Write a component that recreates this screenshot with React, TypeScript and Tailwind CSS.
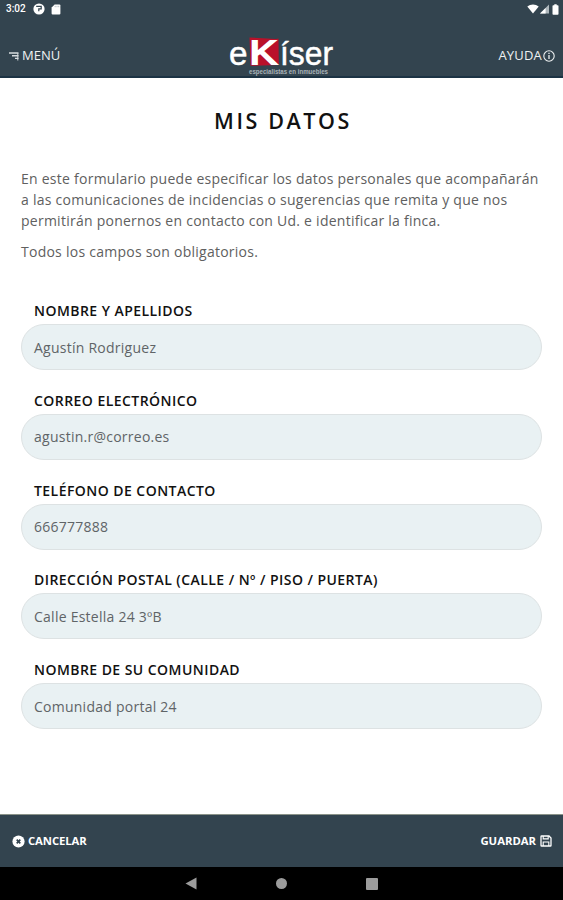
import React from "react";

interface Field {
  id: string;
  label: string;
  value: string;
}

const fields: Field[] = [
  { id: "nombre", label: "NOMBRE Y APELLIDOS", value: "Agustín Rodriguez" },
  { id: "correo", label: "CORREO ELECTRÓNICO", value: "agustin.r@correo.es" },
  { id: "telefono", label: "TELÉFONO DE CONTACTO", value: "666777888" },
  { id: "direccion", label: "DIRECCIÓN POSTAL (CALLE / Nº / PISO / PUERTA)", value: "Calle Estella 24 3ºB" },
  { id: "comunidad", label: "NOMBRE DE SU COMUNIDAD", value: "Comunidad portal 24" },
];

function StatusBar() {
  return (
    <div className="flex h-[18px] items-center justify-between pl-[6px] pr-[4px] font-['Roboto',sans-serif] text-white">
      <div className="flex items-center">
        <span className="w-[27px] text-[10px] font-medium leading-none">3:02</span>
        <svg className="h-[12px] w-[12px]" viewBox="0 0 12 12">
          <circle cx="6" cy="6" r="5.6" fill="#fff" />
          <path d="M3.2 3.4h5v2.400h-2.400v2.400" fill="none" stroke="#33444f" strokeWidth="1.200" />
        </svg>
        <svg className="ml-[6px] h-[11px] w-[10px]" viewBox="0 0 10 11">
          <path d="M3.600.6H8.400a1 1 0 011 1v7.800a1 1 0 01-1 1H1.600a1 1 0 01-1-1V3.600z" fill="#fff" />
          <path d="M4.200 1.800v1.400M6 1.800v1.400M7.700 1.800v1.400" stroke="#8b979e" strokeWidth=".6" />
        </svg>
      </div>
      <div className="flex items-center">
        <svg className="h-[10px] w-[12px]" viewBox="0 0 12 10">
          <path d="M.3 2.600C3.600-.3 8.400-.3 11.700 2.600L6 9.600z" fill="#fff" />
        </svg>
        <svg className="ml-px h-[10px] w-[9px]" viewBox="0 0 9 10">
          <path d="M9 .4V9.400H0z" fill="#aeb7bc" />
          <path d="M5.600 3.900V9.400H0z" fill="#fff" />
        </svg>
        <svg className="ml-[3px] h-[11px] w-[7px]" viewBox="0 0 7 11">
          <path d="M2.300.3h2.400v1h1a.8.8 0 01.8.8v7.800a.8.8 0 01-.8.8H1.300a.8.8 0 01-.8-.8V2.100a.8.8 0 01.8-.8h1z" fill="#fff" />
        </svg>
      </div>
    </div>
  );
}

function Logo() {
  return (
    <svg
      className="h-[41px] w-[110px] overflow-visible"
      viewBox="0 0 110 41"
      fontFamily="'Liberation Sans', Arial, sans-serif"
    >
      <path d="M22.500 2.500L49 4l2.500-.6.3 26.600-28.300.800z" fill="#b9112a" />
      <g fill="#fff" stroke="#fff" strokeWidth=".5">
        <text x="2" y="29.500" fontSize="33" textLength="18.500" lengthAdjust="spacingAndGlyphs">e</text>
        <text x="22.500" y="29" fontSize="33" strokeWidth="1.800" textLength="27.500" lengthAdjust="spacingAndGlyphs">K</text>
        <text x="53" y="29.500" fontSize="33" textLength="53" lengthAdjust="spacingAndGlyphs">íser</text>
      </g>
      <text x="22" y="38.500" fontSize="7" fontWeight="700" fill="#a9b3b9" textLength="79" lengthAdjust="spacingAndGlyphs">
        especialistas en inmuebles
      </text>
    </svg>
  );
}

function Header() {
  return (
    <header className="h-[78px] border-b-2 border-[#1c3344] bg-[#33444f]">
      <StatusBar />
      <div className="grid grid-cols-[1fr_110px_1fr] pt-[17px] text-[13px] text-[#eef1f2]">
        <button className="flex h-[42px] items-center pl-[9px]">
          <svg className="h-[9px] w-[10px]" viewBox="0 0 10 9">
            <path d="M0 1h9.500M3 3.700h6.500M6 6.400h3.500" stroke="#d5dadd" strokeWidth="1.400" />
            <path d="M8.800 1v7.500" stroke="#d5dadd" strokeWidth="1" />
          </svg>
          <span className="ml-[3px]">MENÚ</span>
        </button>
        <Logo />
        <button className="flex h-[42px] items-center justify-end pr-[8px]">
          <span className="tracking-[0.2px]">AYUDA</span>
          <svg className="ml-px h-[12px] w-[12px]" viewBox="0 0 12 12" fill="none" stroke="#eef1f2">
            <circle cx="6" cy="6" r="5.200" strokeWidth="1.100" />
            <path d="M6 2.800v1.300M6 5.100v4" strokeWidth="1.300" />
          </svg>
        </button>
      </div>
    </header>
  );
}

function FormField({ field }: { field: Field }) {
  return (
    <div>
      <div id={field.id} className="pl-[13px] text-[14px] font-semibold leading-[20px] tracking-[0.45px] text-[#111]">
        {field.label}
      </div>
      <div
        aria-labelledby={field.id}
        className="mt-[3px] flex h-[46px] items-center rounded-full border border-[#dde2e3] bg-[#e9f1f3] pl-[12px] text-[14px] tracking-[0.25px] text-[#5f6467]"
      >
        {field.value}
      </div>
    </div>
  );
}

export default function App() {
  return (
    <div className="flex h-[900px] w-[563px] flex-col overflow-hidden bg-white font-['Open_Sans',sans-serif]">
      <Header />

      <main className="flex-1 px-[21px]">
        <h1 className="mt-[28px] pl-[3px] text-center text-[21.5px] font-semibold leading-[30px] tracking-[2.6px] text-[#111]">
          MIS DATOS
        </h1>
        <div className="mt-[32px] whitespace-nowrap text-[14px] leading-[21px] tracking-[0.25px] text-[#606060]">
          <p>
            En este formulario puede especificar los datos personales que acompañarán
            <br />
            a las comunicaciones de incidencias o sugerencias que remita y que nos
            <br />
            permitirán ponernos en contacto con Ud. e identificar la finca.
          </p>
          <p className="mt-[10px]">Todos los campos son obligatorios.</p>
        </div>
        <div className="mt-[39px] flex flex-col gap-[20.800px]">
          {fields.map((field) => (
            <FormField key={field.id} field={field} />
          ))}
        </div>
      </main>

      <footer className="flex h-[53px] items-center justify-between border-t border-[#8b9389] bg-[#33444f] pl-[12px] pr-[11px] text-[11.3px] font-bold text-white">
        <button className="flex items-center gap-[3px]">
          <svg className="h-[13px] w-[13px]" viewBox="0 0 13 13">
            <circle cx="6.500" cy="6.500" r="6.100" fill="#fff" />
            <path d="M4.700 4.700l3.600 3.600M8.300 4.700L4.700 8.300" stroke="#33444f" strokeWidth="1.700" />
          </svg>
          <span className="tracking-[-0.1px]">CANCELAR</span>
        </button>
        <button className="flex items-center gap-[4px]">
          <span>GUARDAR</span>
          <svg className="h-[12px] w-[12px]" viewBox="0 0 12 12" fill="none" stroke="#fff">
            <path d="M1 1.600a.6.6 0 01.6-.6H9l2 2v7.400a.6.6 0 01-.6.6H1.600a.6.6 0 01-.6-.6z" strokeWidth="1.300" />
            <path d="M3.200 1v2.900h5V1M3.200 11V7h5.600v4" strokeWidth="1.100" />
          </svg>
        </button>
      </footer>

      <nav className="flex h-[33px] items-center justify-center gap-[79px] bg-black">
        <svg className="h-[13px] w-[12px]" viewBox="0 0 12 13">
          <path d="M11.500 .4v12.200L.5 6.500z" fill="#9c9c9c" />
        </svg>
        <div className="h-[11px] w-[11px] rounded-full bg-[#9c9c9c]" />
        <div className="h-[12px] w-[12px] rounded-[1px] bg-[#9c9c9c]" />
      </nav>
    </div>
  );
}
